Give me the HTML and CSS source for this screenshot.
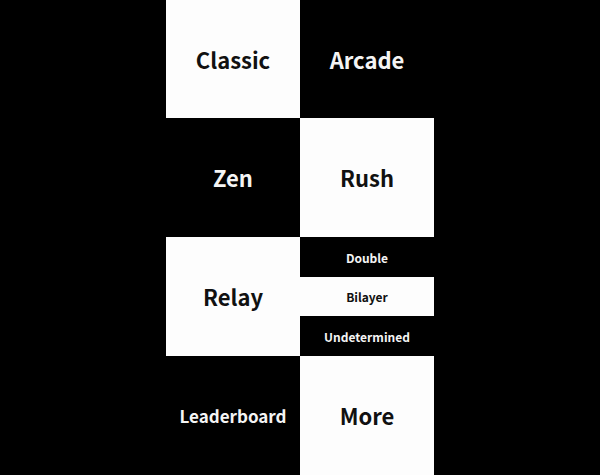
FILE: index.html
```html
<!DOCTYPE html>
<html>
<head>
<meta charset="utf-8">
<link rel="stylesheet" href="styles.css">
</head>
<body>
<main class="menu">
  <div class="cell white">Classic</div>
  <div class="cell black">Arcade</div>
  <div class="cell black">Zen</div>
  <div class="cell white">Rush</div>
  <div class="cell white">Relay</div>
  <div class="sub">
    <div class="subcell black">Double</div>
    <div class="subcell white">Bilayer</div>
    <div class="subcell black">Undetermined</div>
  </div>
  <div class="cell black lb">Leaderboard</div>
  <div class="cell white">More</div>
</main>
</body>
</html>
```
FILE: styles.css
```css
html, body {
  margin: 0;
  padding: 0;
  background: #000;
}
body {
  width: 600px;
  height: 475px;
  overflow: hidden;
  font-family: "Noto Sans CJK SC", "Noto Sans", sans-serif;
  font-weight: 700;
}
.menu {
  width: 268px;
  margin: 0 auto;
  display: grid;
  grid-template-columns: 134px 134px;
  grid-template-rows: 118px 119px 119px 119px;
}
.cell {
  display: flex;
  align-items: center;
  justify-content: center;
  font-size: 22px;
  padding-bottom: 1px;
}
.lb {
  font-size: 17px;
}
.white {
  background: #fdfdfd;
  color: #111;
}
.black {
  background: #000;
  color: #f4f4f4;
}
.sub {
  display: grid;
  grid-template-rows: 40px 39px 40px;
}
.subcell {
  display: flex;
  align-items: center;
  justify-content: center;
  font-size: 12px;
}
```
